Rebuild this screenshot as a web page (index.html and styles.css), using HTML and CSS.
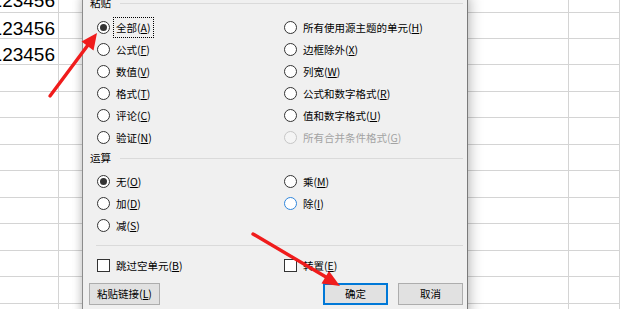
FILE: index.html
```html
<!DOCTYPE html>
<html lang="zh-CN">
<head>
<meta charset="utf-8">
<title>选择性粘贴</title>
<link rel="stylesheet" href="styles.css">
</head>
<body>
<div class="sheet">
  <div class="cell num first">123456</div><div class="cell"></div><div class="cell"></div>
  <div class="cell num">123456</div><div class="cell"></div><div class="cell"></div>
  <div class="cell num">123456</div><div class="cell"></div><div class="cell"></div>
  <div class="cell"></div><div class="cell"></div><div class="cell"></div>
  <div class="cell"></div><div class="cell"></div><div class="cell"></div>
  <div class="cell"></div><div class="cell"></div><div class="cell"></div>
  <div class="cell"></div><div class="cell"></div><div class="cell"></div>
  <div class="cell"></div><div class="cell"></div><div class="cell"></div>
  <div class="cell"></div><div class="cell"></div><div class="cell"></div>
  <div class="cell"></div><div class="cell"></div><div class="cell"></div>
  <div class="cell"></div><div class="cell"></div><div class="cell"></div>
  <div class="cell"></div><div class="cell"></div><div class="cell"></div>
  <div class="cell"></div><div class="cell"></div><div class="cell"></div>
</div>

<div class="dialog">
  <div class="group-head"><span class="group-label">粘贴</span><span class="group-line"></span></div>
  <div class="options paste">
    <div class="opt"><span class="radio checked"></span><span class="lbl focus">全部(<u>A</u>)</span></div>
    <div class="opt"><span class="radio"></span><span class="lbl">公式(<u>F</u>)</span></div>
    <div class="opt"><span class="radio"></span><span class="lbl">数值(<u>V</u>)</span></div>
    <div class="opt"><span class="radio"></span><span class="lbl">格式(<u>T</u>)</span></div>
    <div class="opt"><span class="radio"></span><span class="lbl">评论(<u>C</u>)</span></div>
    <div class="opt"><span class="radio"></span><span class="lbl">验证(<u>N</u>)</span></div>
    <div class="opt"><span class="radio"></span><span class="lbl">所有使用源主题的单元(<u>H</u>)</span></div>
    <div class="opt"><span class="radio"></span><span class="lbl">边框除外(<u>X</u>)</span></div>
    <div class="opt"><span class="radio"></span><span class="lbl">列宽(<u>W</u>)</span></div>
    <div class="opt"><span class="radio"></span><span class="lbl">公式和数字格式(<u>R</u>)</span></div>
    <div class="opt"><span class="radio"></span><span class="lbl">值和数字格式(<u>U</u>)</span></div>
    <div class="opt disabled"><span class="radio"></span><span class="lbl">所有合并条件格式(<u>G</u>)</span></div>
  </div>

  <div class="group-head op-head"><span class="group-label">运算</span><span class="group-line"></span></div>
  <div class="options ops">
    <div class="opt"><span class="radio checked"></span><span class="lbl">无(<u>O</u>)</span></div>
    <div class="opt"><span class="radio"></span><span class="lbl">加(<u>D</u>)</span></div>
    <div class="opt"><span class="radio"></span><span class="lbl">减(<u>S</u>)</span></div>
    <div class="opt"><span class="radio"></span><span class="lbl">乘(<u>M</u>)</span></div>
    <div class="opt"><span class="radio hover"></span><span class="lbl">除(<u>I</u>)</span></div>
  </div>

  <div class="separator"></div>

  <div class="options checks">
    <div class="opt"><span class="checkbox"></span><span class="lbl">跳过空单元(<u>B</u>)</span></div>
    <div class="opt"><span class="checkbox"></span><span class="lbl">转置(<u>E</u>)</span></div>
  </div>

  <div class="buttons">
    <button class="btn btn-link">粘贴链接(<u>L</u>)</button>
    <span class="spacer"></span>
    <button class="btn btn-ok">确定</button>
    <button class="btn btn-cancel">取消</button>
  </div>
</div>

<svg class="arrows" width="620" height="309" viewBox="0 0 620 309" aria-hidden="true">
  <line x1="50" y1="96" x2="88" y2="45" stroke="#f01c1c" stroke-width="3.4" stroke-linecap="round"/>
  <polygon points="97,33 93.5,50.5 81.5,41.5" fill="#f01c1c"/>
  <line x1="253" y1="234" x2="326" y2="277" stroke="#f01c1c" stroke-width="3.4" stroke-linecap="round"/>
  <polygon points="340,286 321.5,283.5 329,271" fill="#f01c1c"/>
</svg>
</body>
</html>
```

FILE: styles.css
```css
html, body {
  margin: 0;
  padding: 0;
}
body {
  width: 620px;
  height: 309px;
  overflow: hidden;
  position: relative;
  background: #ffffff;
  font-family: "Noto Sans CJK SC", "Noto Sans", sans-serif;
}

/* spreadsheet */
.sheet {
  display: grid;
  grid-template-columns: 59px 510px 1fr;
  grid-template-rows: 13px 26px 26px 27px 26px 27px 26px 27px 26px 27px 26px 27px 30px;
}
.cell {
  box-sizing: border-box;
  border-right: 1px solid #d4d4d4;
  border-bottom: 1px solid #d4d4d4;
  overflow: hidden;
}
.num {
  display: flex;
  justify-content: flex-end;
  align-items: flex-end;
  padding-right: 3px;
  font-family: "Liberation Sans", Arial, sans-serif;
  font-size: 19px;
  line-height: 19px;
  color: #000;
  white-space: nowrap;
}
.num.first {
  padding-bottom: 2px;
}

/* dialog */
.dialog {
  position: absolute;
  left: 82px;
  top: -4px;
  width: 386px;
  box-sizing: border-box;
  background: #f0f0f0;
  border-left: 1px solid #8c8c8c;
  border-right: 1px solid #7a7a7a;
  box-shadow: 3px 0 12px rgba(0, 0, 0, 0.22), -2px 0 8px rgba(0, 0, 0, 0.12);
  padding-bottom: 12px;
  font-size: 10.5px;
  color: #000;
}
.group-head {
  display: flex;
  align-items: center;
  height: 14px;
  padding-left: 7px;
  padding-right: 4px;
}
.group-label {
  line-height: 14px;
  white-space: nowrap;
}
.group-line {
  flex: 1;
  height: 1px;
  background: #dadada;
  margin-left: 9px;
}
.op-head {
  margin-top: 3px;
}

.options {
  display: grid;
  grid-template-columns: 187px 1fr;
  grid-auto-flow: column;
  padding-left: 14px;
}
.paste {
  margin-top: 6px;
  grid-template-rows: repeat(6, 22px);
}
.ops {
  margin-top: 5px;
  grid-template-rows: repeat(3, 22px);
}
.checks {
  margin-top: 8px;
  grid-template-rows: 22px;
}

.opt {
  display: flex;
  align-items: center;
  gap: 4px;
  white-space: nowrap;
}
.lbl {
  padding: 2px 2px;
  line-height: 15px;
}
.lbl u {
  text-decoration-thickness: 1px;
  text-underline-offset: 1px;
}
.focus {
  outline: 1px dotted #000;
}

.radio {
  position: relative;
  width: 13px;
  height: 13px;
  box-sizing: border-box;
  border: 1px solid #333333;
  border-radius: 50%;
  background: #ffffff;
  flex: none;
}
.radio.checked::after {
  content: "";
  position: absolute;
  left: 2px;
  top: 2px;
  width: 7px;
  height: 7px;
  border-radius: 50%;
  background: #333333;
}
.radio.hover {
  border-color: #2f86dc;
}
.disabled .radio {
  border-color: #c6c6c6;
  background: #f4f4f4;
}
.disabled .lbl {
  color: #a3a3a3;
}

.checkbox {
  width: 13px;
  height: 13px;
  box-sizing: border-box;
  border: 1px solid #333333;
  background: #ffffff;
  flex: none;
}

.separator {
  height: 1px;
  background: #dadada;
  margin: 9px 4px 0 13px;
}

.buttons {
  display: flex;
  align-items: center;
  gap: 10px;
  margin-top: 7px;
  padding-left: 6px;
  padding-right: 4px;
}
.spacer {
  flex: 1;
}
.btn {
  height: 22px;
  box-sizing: border-box;
  border: 1px solid #adadad;
  background: #e1e1e1;
  font-family: "Noto Sans CJK SC", "Noto Sans", sans-serif;
  font-size: 10.5px;
  color: #000;
  padding: 0;
  line-height: 18px;
}
.btn-link {
  width: 71px;
}
.btn-ok {
  width: 65px;
  border: 2px solid #0078d7;
}
.btn-cancel {
  width: 65px;
}

.arrows {
  position: absolute;
  left: 0;
  top: 0;
  pointer-events: none;
}
```
